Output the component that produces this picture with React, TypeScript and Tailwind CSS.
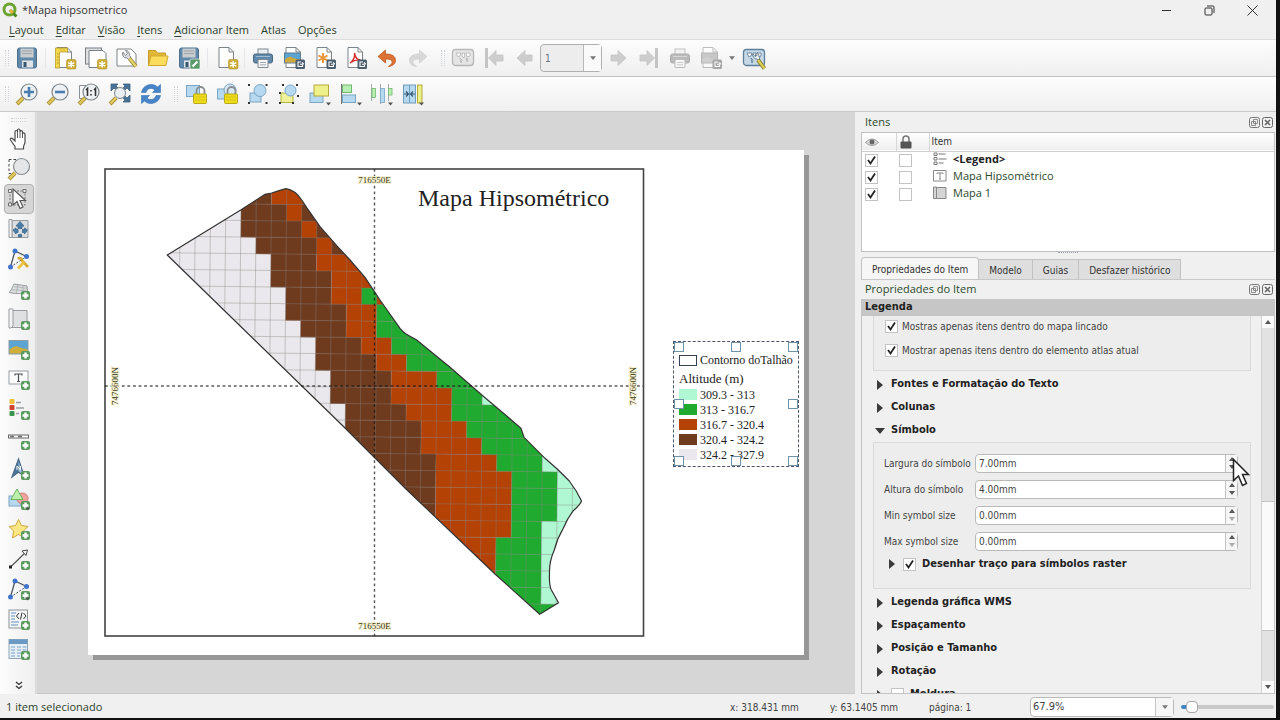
import { useState, type ReactNode } from "react";

/* ---------- icon building blocks ---------- */

function Svg({ children, faded = false }: { children: ReactNode; faded?: boolean }) {
  return (
    <svg viewBox="0 0 24 24" className={faded ? "size-6 opacity-50 grayscale" : "size-6"} fill="none" aria-hidden="true">
      {children}
    </svg>
  );
}

const PlusBadge = () => (
  <g>
    <rect x="14" y="14" width="9" height="9" rx="2" fill="#5a9a5e" />
    <path d="M18.500 15.500v6M15.500 18.500h6" stroke="#fff" strokeWidth="2.400" />
  </g>
);

const StarBadge = () => (
  <g>
    <rect x="13.500" y="13.500" width="9.500" height="9.500" rx="1.500" fill="#cfae36" stroke="#b5952a" strokeWidth="0.600" />
    <path d="M18.200 15v6.500M15.200 16.600l6 3.400M21.200 16.600l-6 3.400" stroke="#fff" strokeWidth="1.500" />
  </g>
);

const ExportBadge = () => (
  <g>
    <rect x="13.500" y="13.500" width="9.500" height="9.500" rx="1.500" fill="#4c5f6e" />
    <path d="M19 16h-3v4.500h4.500V19M18 18.200h3.500M20 16.400l1.800 1.800" stroke="#fff" strokeWidth="1.100" />
  </g>
);

const Paper = () => (
  <path d="M4 1.500h10l4.500 4.500v15.500h-14.500zM14 1.500v4.500h4.500" fill="#fff" stroke="#7d8489" strokeWidth="1" />
);

const Handle = () => (
  <g>
    <path d="M2 22l6-6" stroke="#a8923a" strokeWidth="4" />
    <path d="M2.500 21.500l5.500-5.500" stroke="#e3c85a" strokeWidth="2.400" />
  </g>
);

const Caret = () => <path d="M18 20.500h5l-2.500 3z" fill="#555" />;

const Disk = () => (
  <g>
    <rect x="2.500" y="2" width="19" height="20" rx="2" fill="#5f88ab" stroke="#4c6f8c" />
    <rect x="5.500" y="2.500" width="13" height="9" fill="#c9cdd0" />
    <path d="M7 5h10M7 7.500h10" stroke="#9da3a8" />
    <rect x="7" y="14.500" width="11" height="7" fill="#dfe3e6" />
    <rect x="8.500" y="16" width="3" height="5" fill="#39566f" />
  </g>
);

const Printer = () => (
  <g>
    <rect x="7" y="3" width="10" height="6" fill="#eceff1" stroke="#7f8b95" />
    <rect x="2.500" y="8" width="19" height="9" rx="2" fill="#5f88ab" stroke="#48687f" />
    <path d="M5 10.500h14" stroke="#9dbbd2" />
    <path d="M7 13.500h10v8h-10z" fill="#f4f6f7" stroke="#7f8b95" />
    <path d="M9 16.500h6M9 18.800h6" stroke="#a0a8af" />
  </g>
);

const Picture = () => (
  <g>
    <rect x="2.500" y="7" width="16" height="10" fill="#5ba4d4" stroke="#5e7c8c" />
    <path d="M3 16.500v-3c4-4 6-3 8-1.500 3 1 5 1 7 1.500v3z" fill="#d1a93a" />
  </g>
);

const Arrow = ({ d }: { d: string }) => <path d={d} fill="#9fa8ac" stroke="#8d979b" strokeWidth="0.800" />;

const Nodes = () => (
  <g>
    <path d="M3.500 20L8 4l11.500 5.500" stroke="#505860" strokeWidth="1.300" />
    <path d="M3.500 20l16-10.500" stroke="#505860" strokeDasharray="2 1.500" />
    <circle cx="3.500" cy="20" r="2.500" fill="#3f74cc" />
    <circle cx="8" cy="4" r="2.500" fill="#3f74cc" />
    <circle cx="19.500" cy="9.500" r="2.500" fill="#3f74cc" />
  </g>
);

const Lock = () => (
  <g>
    <path d="M12.500 12.500v-3.500a4 4 0 0 1 8 0v3.500" stroke="#8b8f92" strokeWidth="1.800" />
    <rect x="9.500" y="12" width="13" height="9.500" rx="1" fill="#eddb1c" stroke="#b9a81a" />
    <path d="M11 15h10M11 18h10" stroke="#d8c415" />
  </g>
);

const MapSheet = () => (
  <g>
    <rect x="1.500" y="3.500" width="21" height="16" rx="3" fill="#c6d8e6" stroke="#5d7f9b" strokeWidth="1.300" />
    <path d="M5 7h5l-1 3-2 1zM11 7h3l-1 5-2-2zM15 7h4v3l-3 1zM9 12l2 2-1 3zM15 12l2 1-1 3z" fill="#fff" stroke="#55758f" strokeWidth="0.800" />
  </g>
);

/* ---------- icons ---------- */

const icons = {
  save: <Svg><Disk /></Svg>,
  newLayout: (
    <Svg>
      <Paper />
      <path d="M2.500 2h12v4h-8v16h-4z" fill="#f2d84a" stroke="#b89c2c" strokeWidth="0.800" />
      <path d="M4 8h1.500M4 11h1.500M4 14h1.500M4 17h1.500M8 3.500v1M11 3.500v1" stroke="#8d7720" strokeWidth="0.700" />
      <StarBadge />
    </Svg>
  ),
  duplicate: (
    <Svg>
      <rect x="1.500" y="2" width="16" height="16" fill="#dfe1e3" stroke="#777f85" />
      <path d="M5 4.500h14l3 3v14h-17z" fill="#fff" stroke="#777f85" />
      <StarBadge />
    </Svg>
  ),
  manager: (
    <Svg>
      <path d="M2 3h14l5 5v12h-19z" fill="#fff" stroke="#7d8489" />
      <path d="M8 6a4 4 0 0 0 4 6l1.500 1.500 2.500-2.500-1.500-1.500a4 4 0 0 0-4-5l2 3-2 2z" fill="#d9dcdf" stroke="#6d747a" strokeWidth="0.800" />
      <path d="M14.500 12.500l6.500 8" stroke="#9a8a3b" strokeWidth="4" />
      <path d="M14.500 12.500l6.500 8" stroke="#e2d16a" strokeWidth="2.400" />
    </Svg>
  ),
  folder: (
    <Svg>
      <path d="M2.500 19.500v-15h7l2 2.500h8v12.500z" fill="#e3b638" stroke="#c39a28" />
      <path d="M2.500 19.500L5 10h17l-2 9.500z" fill="#fbdc5c" stroke="#d0a932" />
    </Svg>
  ),
  saveAs: (
    <Svg>
      <Disk />
      <rect x="13" y="13" width="10" height="10" rx="1.500" fill="#5a9a6a" stroke="#fff" strokeWidth="0.600" />
      <path d="M15.500 20.500l5-5" stroke="#fff" strokeWidth="2" />
    </Svg>
  ),
  addPage: <Svg><Paper /><StarBadge /></Svg>,
  print: <Svg><Printer /></Svg>,
  exportImage: <Svg><Paper /><Picture /><ExportBadge /></Svg>,
  exportSvg: (
    <Svg>
      <Paper />
      <path d="M10 7v10M5.500 9.500l9 5M14.500 9.500l-9 5" stroke="#ea963b" strokeWidth="2" />
      <ExportBadge />
    </Svg>
  ),
  exportPdf: (
    <Svg>
      <Paper />
      <path d="M6 17c3-2 5-6 4.500-10 1 5 3 7 6 7-4-.500-7 .500-10.500 3z" stroke="#d5302e" strokeWidth="1.400" />
      <ExportBadge />
    </Svg>
  ),
  undo: (
    <Svg>
      <path d="M3 10.500L10.500 4v4c7 0 10 2.500 10 6.500 0 3-2.500 5.500-7 6 3-2 4-3.500 3.500-5.500-.500-1.500-3-2-6.500-2v4z" fill="#dc7135" stroke="#bd5a24" strokeWidth="0.800" />
    </Svg>
  ),
  redo: (
    <Svg faded>
      <path d="M21 10.500L13.500 4v4c-7 0-10 2.500-10 6.500 0 3 2.500 5.500 7 6-3-2-4-3.500-3.500-5.500.500-1.500 3-2 6.500-2v4z" fill="#b4bcbe" stroke="#a5aeb0" strokeWidth="0.800" />
    </Svg>
  ),
  atlas: <Svg faded><MapSheet /></Svg>,
  first: <Svg faded><rect x="3" y="2" width="3" height="20" fill="#8d979b" /><Arrow d="M6.500 12L14 4.500v4.500h7v6h-7v4.500z" /></Svg>,
  prev: <Svg faded><Arrow d="M4 12l8-7.500v4.500h7v6h-7v4.500z" /></Svg>,
  next: <Svg faded><Arrow d="M20 12l-8-7.500v4.500h-7v6h7v4.500z" /></Svg>,
  last: <Svg faded><rect x="18" y="2" width="3" height="20" fill="#8d979b" /><Arrow d="M17.500 12L10 4.500v4.500h-7v6h7v4.500z" /></Svg>,
  printAtlas: <Svg faded><Printer /></Svg>,
  exportAtlas: <Svg faded><Paper /><Picture /><ExportBadge /></Svg>,
  atlasSettings: (
    <Svg>
      <MapSheet />
      <path d="M11 8a4 4 0 0 0 4 5l1 1 2-2-1-1.500a4 4 0 0 0-2-4l0 3-2 1z" fill="#eef1f3" stroke="#56738c" strokeWidth="0.800" />
      <path d="M16 14l6.500 8.500" stroke="#7d7a33" strokeWidth="4" />
      <path d="M16 14l6.500 8.500" stroke="#e0cf57" strokeWidth="2.200" />
    </Svg>
  ),
  zoomIn: (
    <Svg>
      <Handle />
      <circle cx="14" cy="10" r="8" fill="#eef1f3" stroke="#7d858a" strokeWidth="1.200" />
      <path d="M14 5v10M9 10h10" stroke="#4a7daf" strokeWidth="2.600" />
    </Svg>
  ),
  zoomOut: (
    <Svg>
      <Handle />
      <circle cx="14" cy="10" r="8" fill="#eef1f3" stroke="#7d858a" strokeWidth="1.200" />
      <path d="M9 10h10" stroke="#4a7daf" strokeWidth="2.600" />
    </Svg>
  ),
  zoomActual: (
    <Svg>
      <path d="M2.500 3.500h10v13h-10z" fill="#f7f7f7" stroke="#8b9196" />
      <Handle />
      <circle cx="14" cy="10" r="8" fill="#eef1f3" stroke="#7d858a" strokeWidth="1.200" />
      <path d="M9 8l1.500-1.500v7.500M17 8l1.500-1.500v7.500M14 8v1.500M14 12v1.500" stroke="#333" strokeWidth="1.600" />
    </Svg>
  ),
  zoomFull: (
    <Svg>
      <path d="M3 2h7l-2 2 2 2-2 2-2-2-3 3zM22 2h-7l2 2-2 2 2 2 2-2 3 3zM22 20h-7l2-2-2-2 2-2 2 2 3-3z" fill="#4a7296" stroke="#3c5f7f" strokeWidth="0.800" />
      <Handle />
      <circle cx="12" cy="11" r="5.500" fill="#e9eef1" stroke="#7d858a" />
    </Svg>
  ),
  refresh: (
    <Svg>
      <path d="M2.500 10.500C3.500 5 8 2.500 12.500 2.500c2.500 0 4.500 1 6 2.500L21.500 2.500v8h-8l2.500-2.500c-3.500-3-8-1.500-9 2.500z" fill="#4785c8" stroke="#3570b0" strokeWidth="0.600" />
      <path d="M21.500 13.500c-1 5.500-5.500 8-10 8-2.500 0-4.500-1-6-2.500L2.500 21.500v-8h8L8 16c3.500 3 8 1.500 9-2.500z" fill="#4785c8" stroke="#3570b0" strokeWidth="0.600" />
    </Svg>
  ),
  lock: <Svg><rect x="2.500" y="3.500" width="13" height="11" fill="#b7d9ef" stroke="#7aa5c4" /><Lock /></Svg>,
  unlock: <Svg><rect x="2.500" y="7" width="11" height="10" fill="#b7d9ef" stroke="#7aa5c4" /><circle cx="15" cy="8" r="6" fill="#d5e8f4" stroke="#7aa5c4" /><Lock /></Svg>,
  group: (
    <Svg>
      <rect x="4" y="11" width="11" height="9" fill="#b7d9ef" stroke="#7aa5c4" />
      <circle cx="14" cy="8.500" r="6" fill="#b7d9ef" stroke="#7aa5c4" />
      <path d="M2 2h2v2h-2zM19.500 2h2v2h-2zM2 20h2v2h-2zM19.500 20h2v2h-2z" fill="#333" />
    </Svg>
  ),
  ungroup: (
    <Svg>
      <rect x="4" y="11" width="12" height="9.500" fill="#eef09a" stroke="#b3b545" />
      <circle cx="13.500" cy="8.500" r="5.500" fill="#b7d9ef" stroke="#7aa5c4" />
      <path d="M5 2h2v2h-2zM19 2h2v2h-2zM2 10h2v2h-2zM2 20h2v2h-2zM15 20h2v2h-2zM20 13h2v2h-2z" fill="#333" />
    </Svg>
  ),
  raise: (
    <Svg>
      <rect x="2" y="11" width="13" height="9.500" fill="#b7d9ef" stroke="#7aa5c4" />
      <rect x="6" y="3" width="14.500" height="11" fill="#eef08a" stroke="#b3a93f" />
      <Caret />
    </Svg>
  ),
  align: (
    <Svg>
      <path d="M2.500 2v20" stroke="#777" />
      <rect x="3.500" y="3" width="9" height="7.500" fill="#b8f0b4" stroke="#71b86d" />
      <rect x="3.500" y="13" width="13" height="7.500" fill="#b7d9ef" stroke="#7aa5c4" />
      <Caret />
    </Svg>
  ),
  distribute: (
    <Svg>
      <path d="M1.500 2v17M10.500 2v20M18.500 2v17" stroke="#aaa" />
      <rect x="2" y="6.500" width="3.500" height="9" fill="#b8f0b4" stroke="#71b86d" strokeWidth="0.800" />
      <rect x="10.500" y="6.500" width="4" height="14" fill="#b7d9ef" stroke="#7aa5c4" strokeWidth="0.800" />
      <rect x="18.500" y="6.500" width="3.500" height="6.500" fill="#b8f0b4" stroke="#71b86d" strokeWidth="0.800" />
      <Caret />
    </Svg>
  ),
  resize: (
    <Svg>
      <rect x="2.500" y="3" width="12" height="18" fill="#b7d9ef" stroke="#6f9dbd" />
      <path d="M8.500 3v18" stroke="#6f9dbd" />
      <path d="M3 12h4M14 12h-4M5 9.500l2.500 2.500-2.500 2.500M12 9.500l-2.500 2.500 2.500 2.500" stroke="#355570" strokeWidth="1.200" />
      <rect x="16.500" y="3" width="4.500" height="18" fill="#eef08a" stroke="#b3a93f" />
      <Caret />
    </Svg>
  ),
  pan: (
    <Svg>
      <path d="M8 22v-2.500L3.500 13c-.800-1.500 1-2.500 2.200-1.200L8 14V5c0-2 2.500-2 2.500 0v-1.500c0-2 2.500-2 2.500 0V5c0-1.800 2.500-1.800 2.500 0v2c0-1.500 2.500-1.500 2.500 0.500V15c0 2-1.500 3.500-1.500 5v2z" fill="#fff" stroke="#4b4b4b" strokeWidth="1.200" />
      <path d="M10.500 5v6M13 5v6M15.500 6v5" stroke="#4b4b4b" strokeWidth="0.900" />
    </Svg>
  ),
  zoom: (
    <Svg>
      <path d="M2 2.500h9M2 2.500v14h5" stroke="#444" strokeDasharray="2.500 2" />
      <Handle />
      <circle cx="14.500" cy="9.500" r="8" fill="#e4e6e7" stroke="#888e92" strokeWidth="1.200" />
    </Svg>
  ),
  select: (
    <Svg>
      <rect x="3" y="4" width="15" height="14" stroke="#777" strokeDasharray="2 1.500" />
      <path d="M1.500 2.500h3v3h-3zM16 2.500h3v3h-3zM1.500 16h3v3h-3z" fill="#eee" stroke="#555" strokeWidth="0.800" />
      <path d="M6 2v16l4-3.500 3 7 3-1.500-3-6.500h5.500z" fill="#fff" stroke="#555" strokeWidth="1.100" />
    </Svg>
  ),
  moveContent: (
    <Svg>
      <path d="M5 3.500h16v17h-16z" fill="#dadcdd" stroke="#979c9f" />
      <path d="M2 2.500h3v18h-3z" fill="#f1f1f1" stroke="#979c9f" />
      <path d="M13 4.500l4 4.500h-2v2.500h-4v-2.500h-2zM11.500 20v-2.500h3v2.500zM6 13l3-2v1.500h2v3h-2v1.500zM20.500 13l-3-2v1.500h-2v3h2v1.500z" fill="#4a7da8" stroke="#3a668c" strokeWidth="0.800" />
    </Svg>
  ),
  editNodes: (
    <Svg>
      <Nodes />
      <path d="M11 12c2-2 4 0 4 1.500l6 6.500" stroke="#d8ab32" strokeWidth="2.600" />
      <path d="M11 21.500l6-6.500" stroke="#e9c53f" strokeWidth="2.600" />
    </Svg>
  ),
  map3d: (
    <Svg>
      <path d="M2 15.500c2-1 3-5 5-8.500l13 2c0 4 1 6 2 8.500-6-2-13 0-20-2z" fill="#dcdedf" stroke="#979c9f" />
      <path d="M7 10c4-1 9 2 14 1M5 13c5-1 10 1 16 1M11 8l-2 8M16 8.500l0 8" stroke="#a9adaf" strokeWidth="0.800" />
      <PlusBadge />
    </Svg>
  ),
  addMap: (
    <Svg>
      <path d="M5 3.500h15v17h-15z" fill="#dfe0e1" stroke="#979c9f" />
      <path d="M2 2h4v17l-2 2h-2z" fill="#f4f4f4" stroke="#979c9f" />
      <PlusBadge />
    </Svg>
  ),
  addPicture: (
    <Svg>
      <rect x="2" y="3.500" width="19" height="13.500" fill="#5ba4d4" stroke="#8d9da3" />
      <path d="M2.500 16.500v-4c4-3 7-4 9-2.500 3 1 6 2 9 2v4.500z" fill="#cfae3c" />
      <PlusBadge />
    </Svg>
  ),
  addLabel: (
    <Svg>
      <rect x="2" y="4" width="19" height="13" fill="#fbfbfb" stroke="#9a9fa3" />
      <path d="M8 8.500v-1.500h7v1.500M11.500 7v7.500M10 14.500h3" stroke="#4a4f53" strokeWidth="1.200" />
      <PlusBadge />
    </Svg>
  ),
  addLegend: (
    <Svg>
      <rect x="2.500" y="2" width="5" height="5" rx="1" fill="#eebf3a" />
      <rect x="2.500" y="8" width="5" height="5" rx="1" fill="#cd4433" />
      <rect x="2.500" y="14" width="5" height="5" rx="1" fill="#3d9650" />
      <path d="M9 5.500h5M9 11h8M9 16.500h3" stroke="#9a9ea1" strokeWidth="1.400" />
      <PlusBadge />
    </Svg>
  ),
  addScale: (
    <Svg>
      <rect x="1.500" y="8" width="20" height="3" fill="#fff" stroke="#666" />
      <path d="M3 9.500h4M11 9.500h4" stroke="#777" strokeWidth="2" />
      <PlusBadge />
    </Svg>
  ),
  addNorth: (
    <Svg>
      <path d="M11.500 2l5.500 17-5.500-4-6.500 5z" fill="#9fc1dd" stroke="#3f6384" strokeWidth="1.200" />
      <path d="M11.500 2v13l-6.500 5z" fill="#4a7397" />
      <path d="M10 13v-4l3.500 4v-4" stroke="#fff" strokeWidth="1" />
      <PlusBadge />
    </Svg>
  ),
  addShape: (
    <Svg>
      <rect x="2" y="9" width="12" height="10" fill="#b7d9ef" stroke="#7aa5c4" />
      <circle cx="15.500" cy="11.500" r="5.500" fill="#f0a29c" stroke="#cf7c76" />
      <path d="M10 2l6 10.500h-12z" fill="#bdf0ac" stroke="#6fb35f" />
      <PlusBadge />
      <Caret />
    </Svg>
  ),
  addMarker: (
    <Svg>
      <path d="M11.500 2.500l3 6 6.500 1-4.500 4.500 1 7-6-3.500-6 3.500 1-7-4.500-4.500 6.500-1z" fill="#fde683" stroke="#cfa945" />
      <PlusBadge />
    </Svg>
  ),
  addArrow: (
    <Svg>
      <path d="M3.500 20L19 5" stroke="#555" strokeWidth="1.200" />
      <path d="M15 4l5.500-1-1.500 5.500z" fill="#fff" stroke="#444" />
      <path d="M2 18.500h3v3h-3z" fill="#222" />
      <PlusBadge />
    </Svg>
  ),
  addNode: <Svg><Nodes /><PlusBadge /><Caret /></Svg>,
  addHtml: (
    <Svg>
      <rect x="2" y="3" width="18.500" height="18" fill="#f3f5f6" stroke="#8d9499" />
      <path d="M4 6h5M4 9h4M4 12h4M4 15h8M4 18h7" stroke="#6790bd" strokeWidth="1.200" />
      <path d="M12 6l-2.500 3 2.500 3M16.500 6l2.500 3-2.500 3M15 5.500l-1.500 7" stroke="#333" strokeWidth="1" />
      <PlusBadge />
    </Svg>
  ),
  addTable: (
    <Svg>
      <rect x="2" y="2.500" width="18.500" height="19" fill="#e4eef6" stroke="#8fa6b8" />
      <rect x="2" y="2.500" width="18.500" height="4.500" fill="#6a9ac4" />
      <path d="M4 10h4M10 10h4M15.500 10h4M4 13h4M10 13h4M15.500 13h4M4 16h4M10 16h4M4 19h4M10 19h3" stroke="#7da4c6" strokeWidth="1.200" />
      <PlusBadge />
    </Svg>
  ),
};

type IconName = keyof typeof icons;

/* ---------- toolbars ---------- */

const layoutTools: [IconName, string][] = [
  ["newLayout", "Novo layout"],
  ["duplicate", "Duplicar layout"],
  ["manager", "Gerenciador de layout"],
  ["folder", "Adicionar itens do modelo"],
  ["saveAs", "Salvar como modelo"],
];

const exportTools: [IconName, string][] = [
  ["print", "Imprimir"],
  ["exportImage", "Exportar como imagem"],
  ["exportSvg", "Exportar como SVG"],
  ["exportPdf", "Exportar como PDF"],
  ["undo", "Desfazer"],
  ["redo", "Refazer"],
];

const zoomTools: [IconName, string][] = [
  ["zoomIn", "Aproximar"],
  ["zoomOut", "Afastar"],
  ["zoomActual", "Zoom 100%"],
  ["zoomFull", "Ver tudo"],
  ["refresh", "Atualizar"],
];

const actionTools: [IconName, string][] = [
  ["lock", "Travar itens"],
  ["unlock", "Destravar itens"],
  ["group", "Agrupar"],
  ["ungroup", "Desagrupar"],
  ["raise", "Levantar"],
  ["align", "Alinhar"],
  ["distribute", "Distribuir"],
  ["resize", "Redimensionar"],
];

const sideTools: [IconName, string][] = [
  ["pan", "Mover layout"],
  ["zoom", "Zoom"],
  ["select", "Selecionar item"],
  ["moveContent", "Mover conteúdo"],
  ["editNodes", "Editar nós"],
  ["map3d", "Adicionar mapa 3D"],
  ["addMap", "Adicionar mapa"],
  ["addPicture", "Adicionar imagem"],
  ["addLabel", "Adicionar rótulo"],
  ["addLegend", "Adicionar legenda"],
  ["addScale", "Adicionar barra de escala"],
  ["addNorth", "Adicionar seta norte"],
  ["addShape", "Adicionar forma"],
  ["addMarker", "Adicionar marcador"],
  ["addArrow", "Adicionar seta"],
  ["addNode", "Adicionar item de nó"],
  ["addHtml", "Adicionar HTML"],
  ["addTable", "Adicionar tabela"],
];

function Tool({ icon, label }: { icon: IconName; label: string }) {
  return (
    <button type="button" aria-label={label} className="flex h-8 w-[31px] shrink-0 items-center justify-center rounded hover:bg-gray-200">
      {icons[icon]}
    </button>
  );
}

const Tools = ({ items }: { items: [IconName, string][] }) => (
  <>{items.map(([icon, label]) => <Tool key={icon} icon={icon} label={label} />)}</>
);

const Grip = ({ first = false }: { first?: boolean }) => (
  <div className={`h-4 w-1 shrink-0 border-x border-dotted border-gray-300 ${first ? "ml-[5px] mr-[2px]" : "ml-2 mr-[2px]"}`} />
);
const Divider = ({ tight = false }: { tight?: boolean }) => (
  <div className={`h-5 w-px shrink-0 bg-gray-200 ${tight ? "mx-[2px]" : "mx-[3px]"}`} />
);

const DownArrow = () => (
  <svg viewBox="0 0 8 5" className="h-1 w-1.5" aria-hidden="true">
    <path d="M0 0h8L4 5z" fill="#777" />
  </svg>
);

/* ---------- elevation map ---------- */

const BROWN = "#6f3b1f";
const ORANGE = "#b44204";
const GREEN = "#20ab30";
const MINT = "#b0f8d3";
const WHITE = "#eae8ec";

// [row, first column, end column, colour]; later runs paint over earlier ones
const runs: [number, number, number, string][] = [
  [-4, 0, 2, BROWN], [-4, 2, 6, ORANGE],
  [-3, 0, 2, BROWN], [-3, 2, 6, ORANGE],
  [-2, 0, 8, BROWN], [-2, 3, 4, ORANGE],
  [-1, 0, 9, BROWN], [-1, 4, 5, ORANGE],
  [0, 1, 9, BROWN], [0, 5, 6, ORANGE],
  [1, 2, 5, BROWN], [1, 5, 10, ORANGE],
  [2, 2, 6, BROWN], [2, 6, 11, ORANGE],
  [3, 3, 6, BROWN], [3, 6, 11, ORANGE], [3, 8, 9, GREEN],
  [4, 3, 7, BROWN], [4, 7, 9, ORANGE], [4, 9, 14, GREEN],
  [5, 4, 7, BROWN], [5, 7, 9, ORANGE], [5, 9, 14, GREEN],
  [6, 5, 8, BROWN], [6, 8, 10, ORANGE], [6, 10, 17, GREEN],
  [7, 5, 9, BROWN], [7, 9, 11, ORANGE], [7, 11, 18, GREEN],
  [8, 6, 10, BROWN], [8, 10, 13, ORANGE], [8, 13, 20, GREEN],
  [9, 6, 10, BROWN], [9, 10, 14, ORANGE], [9, 14, 16, GREEN], [9, 16, 20, MINT],
  [10, 7, 11, BROWN], [10, 11, 14, ORANGE], [10, 14, 22, GREEN],
  [11, 7, 12, BROWN], [11, 12, 15, ORANGE], [11, 15, 22, GREEN],
  [12, 7, 12, BROWN], [12, 12, 16, ORANGE], [12, 16, 24, GREEN],
  [13, 7, 13, BROWN], [13, 13, 17, ORANGE], [13, 17, 20, GREEN], [13, 20, 24, MINT],
  [14, 7, 13, BROWN], [14, 13, 18, ORANGE], [14, 18, 21, GREEN], [14, 21, 24, MINT],
  [15, 7, 13, BROWN], [15, 13, 18, ORANGE], [15, 18, 21, GREEN], [15, 21, 24, MINT],
  [16, 7, 13, BROWN], [16, 13, 18, ORANGE], [16, 18, 21, GREEN], [16, 21, 24, MINT],
  [17, 7, 13, BROWN], [17, 13, 18, ORANGE], [17, 18, 20, GREEN], [17, 20, 24, MINT],
  [18, 10, 17, ORANGE], [18, 17, 20, GREEN], [18, 20, 24, MINT],
  [19, 10, 17, ORANGE], [19, 17, 20, GREEN], [19, 20, 24, MINT],
  [20, 10, 17, ORANGE], [20, 17, 20, GREEN], [20, 20, 24, MINT],
  [21, 14, 20, GREEN], [21, 20, 24, MINT],
  [22, 14, 24, GREEN],
  [23, 14, 24, GREEN],
];

const FIELD =
  "M79.300 105L152.700 60L177 44.300L183.700 43Q193 40 198 38.700Q207 40 213.700 50L218.700 57.700L232 76.700L248.700 95.700L262 110L277 127.300L292 150L312 178.300Q315 182 318 184L328.700 190L362 217.300L395 246L418.700 266L433 278.300L436 287.300L457 308.300L470.300 320L481.300 331Q489 341 493.500 351Q492 355 485.300 360.700Q479 369 475.300 378.300Q469 389 466.300 400Q461 412 461.500 423.300Q461 434 463 439.300L470.500 452.700L451.700 464.300L407 424L318 339L256 277Z";

const CELL_W = 15.2;
const CELL_H = 16.54;

function ElevationMap() {
  const cols = Array.from({ length: 31 }, (_, i) => i - 6);
  const rows = Array.from({ length: 29 }, (_, i) => i - 4);
  return (
    <svg viewBox="0 0 716 505" className="block h-full w-full" role="img" aria-label="Mapa 1">
      <defs>
        <clipPath id="field"><path d={FIELD} /></clipPath>
      </defs>
      <rect x="17" y="19" width="538.500" height="467" fill="#fff" stroke="#444" strokeWidth="1.600" />
      <g clipPath="url(#field)">
        <rect width="716" height="505" fill={WHITE} />
        <g transform="translate(152.700 87) rotate(0.600)">
          {runs.map(([row, from, to, color], i) => (
            <rect key={i} x={from * CELL_W} y={row * CELL_H} width={(to - from) * CELL_W} height={CELL_H + 0.3} fill={color} />
          ))}
          <g stroke="#87827f" strokeOpacity="0.500" strokeWidth="0.800">
            {cols.map((c) => <path key={c} d={`M${c * CELL_W} -70V400`} />)}
            {rows.map((r) => <path key={r} d={`M-100 ${r * CELL_H}H370`} />)}
          </g>
        </g>
      </g>
      <path d={FIELD} fill="none" stroke="#333" strokeWidth="1.200" />
      <path d="M286.500 19V486M17 236H555" stroke="#111" strokeOpacity="0.700" strokeWidth="1.400" strokeDasharray="2.800 2.800" fill="none" />
      <g fontFamily="Liberation Serif, serif" fontSize="9" textAnchor="middle" fill="#3b3a20" stroke="#f5f0cf" strokeWidth="2" paintOrder="stroke">
        <text x="286.500" y="33">716550E</text>
        <text x="286.500" y="479">716550E</text>
        <text transform="translate(30 236) rotate(-90)">7476600N</text>
        <text transform="translate(548 236) rotate(-90)">7476600N</text>
      </g>
    </svg>
  );
}

const classes = [
  { label: "309.3 - 313", swatch: "bg-[#b0f8d3]" },
  { label: "313 - 316.7", swatch: "bg-[#20ab30]" },
  { label: "316.7 - 320.4", swatch: "bg-[#b44204]" },
  { label: "320.4 - 324.2", swatch: "bg-[#6f3b1f]" },
  { label: "324.2 - 327.9", swatch: "bg-[#eae8ec]" },
];

const grips = [
  "left-0 top-0", "left-[57px] top-0", "right-0 top-0",
  "left-0 top-[57px]", "right-0 top-[57px]",
  "left-0 bottom-0", "left-[57px] bottom-0", "right-0 bottom-0",
];

function MapLegend() {
  return (
    <div className="absolute left-[585px] top-[191px] size-[126px] border border-dashed border-gray-600 bg-white pl-[5px] pt-[10px] text-[12px] text-[#222]">
      <div className="flex h-4 items-center gap-[3px] whitespace-nowrap">
        <span className="h-[11px] w-[18px] border border-gray-700" />
        Contorno doTalhão
      </div>
      <div className="mt-[3px] h-4 text-[13px] leading-4">Altitude (m)</div>
      {classes.map((c) => (
        <div key={c.label} className="flex h-[15px] items-center gap-[3px]">
          <span className={`h-[11px] w-[18px] ${c.swatch}`} />
          {c.label}
        </div>
      ))}
      {grips.map((g) => (
        <span key={g} className={`absolute size-[10px] border border-[#6f93a8] bg-white ${g}`} />
      ))}
    </div>
  );
}

/* ---------- right panel ---------- */

function Check({ id, label, checked = false }: { id: string; label?: string; checked?: boolean }) {
  return (
    <span className="relative inline-block size-[13px] shrink-0 align-middle">
      <input
        id={id}
        type="checkbox"
        aria-label={label}
        defaultChecked={checked}
        className="peer block size-[13px] appearance-none border border-[#c3c3c3] bg-white"
      />
      <svg viewBox="0 0 13 13" className="pointer-events-none absolute inset-0 hidden size-[13px] peer-checked:block" fill="none" aria-hidden="true">
        <path d="M3 6l2.500 3.500L10 2.500" stroke="#222" strokeWidth="1.800" />
      </svg>
    </span>
  );
}

function DockTitle({ title }: { title: string }) {
  return (
    <div className="flex h-[19px] shrink-0 items-center justify-between pl-1 pr-[2px] font-[Open_Sans,sans-serif] text-[11px] text-[#2b4a2b]">
      <h2>{title}</h2>
      <div className="flex gap-[2px]">
        <button type="button" aria-label="Destacar painel" className="size-[11px]">
          <svg viewBox="0 0 11 11" fill="none" stroke="#777">
            <rect x="0.500" y="0.500" width="10" height="10" rx="2" />
            <path d="M4.500 2.500h4v4h-4zM2.500 4.500h4v4h-4z" strokeWidth="0.800" />
          </svg>
        </button>
        <button type="button" aria-label="Fechar painel" className="size-[11px]">
          <svg viewBox="0 0 11 11" fill="none" stroke="#666">
            <rect x="0.500" y="0.500" width="10" height="10" rx="2" />
            <path d="M3 3l5 5M8 3l-5 5" strokeWidth="1.600" />
          </svg>
        </button>
      </div>
    </div>
  );
}

const treeItems = [
  {
    name: "<Legend>",
    bold: true,
    icon: <path d="M1 1h3v2.500h-3zM1 5.500h3v2.500h-3zM1 10h3v2.500h-3zM5.500 2h7M5.500 7h8M5.500 11h5" stroke="#777" />,
  },
  {
    name: "Mapa Hipsométrico",
    bold: false,
    icon: <path d="M0.500 1.500h12.500v10.500h-12.500zM4 5v-1h6v1M7 4v6M6 10h2" stroke="#888" />,
  },
  {
    name: "Mapa 1",
    bold: false,
    icon: <path d="M3.500 1.500h9.500v11h-9.500zM0.500 1h3v11.500h-3z" fill="#d4d4d4" stroke="#888" />,
  },
];

function ItemsTree() {
  return (
    <div className="h-[120px] shrink-0 border border-[#c2c2c2] bg-white">
      <table className="w-full table-fixed border-collapse text-left">
        <thead>
          <tr className="h-[18px] border-b border-[#cfcfcf] bg-linear-to-b from-white to-[#eeeeee]">
            <th className="w-[34px] border-r border-[#d6d6d6] pl-[3px]">
              <svg viewBox="0 0 14 10" className="h-[10px] w-[14px]" fill="none" aria-label="Visível">
                <path d="M0.500 5.500q6.500-7 13 0q-6.500 6-13 0z" stroke="#999" fill="#ddd" />
                <circle cx="7" cy="5" r="2.500" fill="#666" />
              </svg>
            </th>
            <th className="w-[33px] border-r border-[#d6d6d6] pl-[3px]">
              <svg viewBox="0 0 12 14" className="h-[14px] w-3" fill="none" aria-label="Travado">
                <path d="M3 7v-3a3 3 0 0 1 6 0v3" stroke="#777" strokeWidth="1.500" />
                <rect x="0.500" y="6.500" width="11" height="7" rx="1" fill="#555" />
              </svg>
            </th>
            <th className="pl-[2px] text-[10px] font-normal leading-4 text-[#333]">Item</th>
          </tr>
        </thead>
        <tbody>
          {treeItems.map((item, i) => (
            <tr key={item.name} className="h-[17px]">
              <td className="pl-[3px] leading-none"><Check id={`visible-${i}`} label={`${item.name} visível`} checked /></td>
              <td className="pl-[3px] leading-none"><Check id={`locked-${i}`} label={`${item.name} travado`} /></td>
              <td>
                <div className="flex h-[17px] items-center gap-[6px] pl-1 pb-[2px] font-[Open_Sans,sans-serif] text-[11px] text-[#2b4a2b]">
                  <svg viewBox="0 0 14 14" className="size-[14px]" fill="none" aria-hidden="true">{item.icon}</svg>
                  <span className={item.bold ? "font-bold text-[#222]" : ""}>{item.name}</span>
                </div>
              </td>
            </tr>
          ))}
        </tbody>
      </table>
    </div>
  );
}

const tabs = ["Propriedades do Item", "Modelo", "Guias", "Desfazer histórico"];

const Triangle = ({ open = false }: { open?: boolean }) => (
  <svg viewBox="0 0 10 10" className="size-[10px] shrink-0" aria-hidden="true">
    <path d={open ? "M0 2h10l-5 6z" : "M2 0l6 5-6 5z"} fill="#3a3a3a" />
  </svg>
);

function Section({ title, open = false }: { title: string; open?: boolean }) {
  return (
    <button type="button" aria-expanded={open} className="flex h-[23px] w-full shrink-0 items-center gap-[6px] pl-[2px] text-left text-[11px] font-bold text-[#222]">
      <Triangle open={open} />
      {title}
    </button>
  );
}

function SpinArrow({ up = false, dim = false }: { up?: boolean; dim?: boolean }) {
  return (
    <svg viewBox="0 0 6 4" className="h-1 w-1.5" aria-hidden="true">
      <path d={up ? "M0 4h6L3 0z" : "M0 0h6L3 4z"} fill={dim ? "#aaa" : "#555"} />
    </svg>
  );
}

const sizes = [
  { id: "width", label: "Largura do símbolo", value: "7.00mm" },
  { id: "height", label: "Altura do símbolo", value: "4.00mm" },
  { id: "min", label: "Min symbol size", value: "0.00mm" },
  { id: "max", label: "Max symbol size", value: "0.00mm" },
];

function SpinBox({ id, label, value }: { id: string; label: string; value: string }) {
  return (
    <div className="relative flex h-[26px] items-center">
      <label htmlFor={id} className="w-[91px] shrink-0 whitespace-nowrap">{label}</label>
      <div className="flex h-[19px] min-w-0 flex-1 rounded-sm border border-[#b9b9b9] bg-white">
        <input id={id} type="text" defaultValue={value} className="min-w-0 flex-1 bg-transparent px-[3px] outline-none" />
        <div className="flex w-3 flex-col border-l border-[#c4c4c4] bg-[#f6f6f6]">
          <button type="button" aria-label={`Aumentar ${label}`} className="flex flex-1 items-center justify-center"><SpinArrow up /></button>
          <button type="button" aria-label={`Diminuir ${label}`} className="flex flex-1 items-center justify-center"><SpinArrow dim={value === "0.00mm"} /></button>
        </div>
      </div>
      {id === "width" && (
        <svg viewBox="0 0 18 30" className="pointer-events-none absolute -right-[12px] top-[8px] z-10 h-[30px] w-[18px]" aria-hidden="true">
          <path d="M1.500 1.500v21l5-4.500 4 9.500 4-2-4-9h6z" fill="#fff" stroke="#222" strokeWidth="1.500" />
        </svg>
      )}
    </div>
  );
}

function Properties() {
  return (
    <div className="flex min-h-0 flex-1 border border-[#c4c4c4] text-[10px] text-[#444]">
      <div className="min-w-0 flex-1 overflow-hidden pl-[11px] pr-[10px]">
        <div className="flex h-[55px] flex-col border-x border-b border-[#dadada] bg-[#ededed] pl-[11px]">
          <label className="flex h-[21px] items-center gap-1"><Check id="linked" checked /> Mostras apenas itens dentro do mapa lincado</label>
          <label className="flex h-[26px] items-center gap-1"><Check id="atlas" checked /> Mostrar apenas itens dentro do elemento atlas atual</label>
        </div>
        <div className="pt-[2px]">
          <Section title="Fontes e Formatação do Texto" />
          <Section title="Colunas" />
          <Section title="Símbolo" open />
        </div>
        <div className="h-[147px] border border-[#dadada] bg-[#ededed] pl-[10px] pr-3 pt-[7px]">
          {sizes.map((s) => <SpinBox key={s.id} {...s} />)}
          <div className="flex h-5 items-center gap-[6px] pl-[3px] text-[11px] font-bold text-[#222]">
            <Triangle />
            <Check id="raster-stroke" checked />
            <label htmlFor="raster-stroke">Desenhar traço para símbolos raster</label>
          </div>
        </div>
        <div className="pt-[2px]">
          <Section title="Legenda gráfica WMS" />
          <Section title="Espaçamento" />
          <Section title="Posição e Tamanho" />
          <Section title="Rotação" />
          <div className="flex h-[23px] items-center gap-[6px] pl-[2px] text-[11px] font-bold text-[#222]">
            <Triangle />
            <Check id="frame" />
            <label htmlFor="frame">Moldura</label>
          </div>
        </div>
      </div>
      <div className="flex w-[13px] shrink-0 flex-col border-l border-[#d0d0d0] bg-[#e2e2e2]">
        <button type="button" aria-label="Rolar para cima" className="flex h-3 items-center justify-center bg-[#fafafa]"><SpinArrow up /></button>
        <div className="flex-[174]" />
        <div className="flex-[130] border-y border-[#c4c4c4] bg-[#fafafa]" />
        <div className="flex-[50]" />
        <button type="button" aria-label="Rolar para baixo" className="flex h-3 items-center justify-center bg-[#fafafa]"><SpinArrow /></button>
      </div>
    </div>
  );
}

function SidePanel() {
  const [activeTab, setActiveTab] = useState(0);
  return (
    <aside className="flex w-[421px] shrink-0 flex-col pl-[6px] pr-px pt-[1px] font-[DejaVu_Sans_Condensed,DejaVu_Sans,sans-serif]">
      <DockTitle title="Itens" />
      <ItemsTree />
      <div className="flex h-[6px] shrink-0 justify-center"><span className="h-px w-5 border-t border-dotted border-gray-400" /></div>
      <div role="tablist" className="flex h-[22px] shrink-0 items-end border-b border-[#c8c8c8] text-[10px] text-[#333]">
        {tabs.map((tab, index) => (
          <button
            key={tab}
            type="button"
            role="tab"
            aria-selected={activeTab === index}
            onClick={() => setActiveTab(index)}
            className={`whitespace-nowrap border border-b-0 border-[#c2c2c2] pt-[2px] ${
              activeTab === index ? "h-[22px] rounded-t-sm bg-[#f6f6f6] px-[10px]" : "h-5 border-l-0 bg-[#dedede] px-[10px]"
            }`}
          >
            {tab}
          </button>
        ))}
      </div>
      <DockTitle title={tabs[activeTab]} />
      <h3 className="h-[16px] shrink-0 bg-[#c6c6c6] pl-1 text-[11px] font-bold leading-4 text-[#222]">Legenda</h3>
      <Properties />
    </aside>
  );
}

/* ---------- window ---------- */

const menus = [
  { key: "L", rest: "ayout" },
  { key: "E", rest: "ditar" },
  { key: "V", rest: "isão" },
  { key: "I", rest: "tens" },
  { key: "A", rest: "dicionar Item" },
  { key: "", rest: "Atlas" },
  { key: "", rest: "Opções" },
];

export default function App() {
  return (
    <div className="flex h-screen flex-col overflow-hidden border-b-2 border-r-4 border-[#111] bg-[#f0f0f0] font-[Open_Sans,sans-serif] text-[11px] text-[#333]">
      {/* Title bar */}
      <header className="flex h-5 shrink-0 items-center justify-between pl-[2px] pr-[18px]">
        <div className="flex items-center gap-1">
          <svg viewBox="0 0 16 16" className="size-4" fill="none" aria-hidden="true">
            <circle cx="7.500" cy="7.500" r="5.500" stroke="#6aa32f" strokeWidth="3" />
            <path d="M8 8l6.500 6.500" stroke="#4f8a24" strokeWidth="3" />
            <path d="M8 8l3 3" stroke="#e8b53a" strokeWidth="3" />
          </svg>
          <h1 className="text-[11px]">*Mapa hipsometrico</h1>
        </div>
        <div className="flex items-center gap-8">
          <button type="button" aria-label="Minimizar" className="size-[11px]"><svg viewBox="0 0 11 11"><path d="M1 5.500h9" stroke="#333" /></svg></button>
          <button type="button" aria-label="Restaurar" className="size-[11px]">
            <svg viewBox="0 0 11 11" fill="none" stroke="#333"><rect x="1" y="3" width="7" height="7" rx="1" /><path d="M3 1h6a1 1 0 0 1 1 1v6" /></svg>
          </button>
          <button type="button" aria-label="Fechar" className="size-[11px]"><svg viewBox="0 0 11 11"><path d="M0.500 0.500l10 10M10.500 0.500l-10 10" stroke="#333" /></svg></button>
        </div>
      </header>

      {/* Menu */}
      <nav className="flex h-5 shrink-0 items-center border-b border-[#dcdcdc] pl-[3px] pt-[2px] text-[#2c3f2c]">
        {menus.map((m) => (
          <button key={m.key + m.rest} type="button" className="px-[6px]">
            {m.key && <span className="underline underline-offset-2">{m.key}</span>}{m.rest}
          </button>
        ))}
      </nav>

      {/* Layout toolbar */}
      <div className="flex h-[37px] shrink-0 items-center border-b border-[#c2c2c2] bg-linear-to-b from-[#fdfdfd] to-[#efefef]">
        <Grip first />
        <Tool icon="save" label="Salvar projeto" />
        <Divider />
        <Tools items={layoutTools} />
        <Divider />
        <Tool icon="addPage" label="Adicionar páginas" />
        <Divider tight />
        <Tools items={exportTools} />
        <Grip />
        <Tool icon="atlas" label="Visualizar atlas" />
        <Tool icon="first" label="Primeira feição" />
        <Tool icon="prev" label="Feição anterior" />
        <div className="relative h-7 w-[62px]">
          <select aria-label="Feição do atlas" className="h-7 w-full appearance-none rounded-sm border border-[#b0b0b0] bg-[#ededed] pl-1 font-[DejaVu_Sans_Condensed,sans-serif] text-[10px] text-gray-500">
            <option>1</option>
          </select>
          <span className="pointer-events-none absolute inset-y-px right-px flex w-[18px] items-center justify-center border-l border-[#b8b8b8] bg-[#fafafa]"><DownArrow /></span>
        </div>
        <Tool icon="next" label="Próxima feição" />
        <Tool icon="last" label="Última feição" />
        <Tool icon="printAtlas" label="Imprimir atlas" />
        <Tool icon="exportAtlas" label="Exportar atlas" />
        <div className="mx-[3px]"><DownArrow /></div>
        <Tool icon="atlasSettings" label="Configurações do atlas" />
      </div>

      {/* Actions toolbar */}
      <div className="flex h-[35px] shrink-0 items-center border-b border-[#c8c8c8] bg-linear-to-b from-[#fdfdfd] to-[#efefef]">
        <Grip first />
        <Tools items={zoomTools} />
        <Grip />
        <Tools items={actionTools} />
      </div>

      <div className="flex min-h-0 flex-1">
        {/* Toolbox */}
        <div className="flex w-[37px] shrink-0 flex-col items-center border-r-2 border-[#dcdcdc] bg-linear-to-r from-[#fcfcfc] to-[#efefef] pl-[2px] pt-[6px]">
          <div className="mb-[2px] h-1 w-4 shrink-0 border-y border-dotted border-gray-300" />
          {sideTools.map(([icon, label]) => (
            <button
              key={icon}
              type="button"
              aria-label={label}
              className={`flex h-[30px] w-[30px] shrink-0 items-center justify-center rounded-sm border ${
                icon === "select" ? "border-[#b0b0b0] bg-[#d6d6d6]" : "border-transparent"
              }`}
            >
              {icons[icon]}
            </button>
          ))}
          <button type="button" aria-label="Mais ferramentas" className="mt-[17px]">
            <svg viewBox="0 0 8 9" className="h-[9px] w-2" fill="none" stroke="#333" strokeWidth="1.300"><path d="M1 1l3 2.500L7 1M1 5l3 2.500L7 5" /></svg>
          </button>
        </div>

        {/* Canvas */}
        <main className="flex min-w-0 flex-1 items-center justify-center overflow-hidden border-b border-[#c8c8c8] bg-[#d6d6d6]">
          <div className="relative h-[505px] w-[716px] shrink-0 bg-white font-[Liberation_Serif,serif] shadow-[5px_5px_0_#979797]">
            <ElevationMap />
            <p className="absolute left-[330px] top-[32px] whitespace-nowrap text-[24px] leading-8 text-[#222]">Mapa Hipsométrico</p>
            <MapLegend />
          </div>
        </main>

        <SidePanel />
      </div>

      {/* Status bar */}
      <footer className="flex h-6 shrink-0 items-center pl-[6px] pt-[2px] text-[#2c3f2c]">
        <span className="flex-1">1 item selecionado</span>
        <div className="flex items-center font-[DejaVu_Sans_Condensed,DejaVu_Sans,sans-serif] text-[10px] text-[#444]">
          <span className="w-[100px]">x: 318.431 mm</span>
          <span className="w-[99px]">y: 63.1405 mm</span>
          <span className="w-[101px]">página: 1</span>
          <div className="relative h-5 w-[144px]">
            <select aria-label="Zoom" className="h-5 w-full appearance-none rounded-sm border border-[#b9b9b9] bg-white pl-[2px] text-[11px]">
              <option>67.9%</option>
            </select>
            <span className="pointer-events-none absolute inset-y-px right-px flex w-[18px] items-center justify-center border-l border-[#c4c4c4] bg-[#f6f6f6]"><DownArrow /></span>
          </div>
          <input
            type="range"
            aria-label="Nível de zoom"
            defaultValue={6}
            className="ml-[7px] mr-[2px] h-3 w-[93px] appearance-none bg-transparent [&::-webkit-slider-runnable-track]:h-1 [&::-webkit-slider-runnable-track]:rounded-sm [&::-webkit-slider-runnable-track]:bg-linear-to-r [&::-webkit-slider-runnable-track]:from-[#3d87c4] [&::-webkit-slider-runnable-track]:from-5% [&::-webkit-slider-runnable-track]:to-[#c9c9c9] [&::-webkit-slider-runnable-track]:to-5% [&::-webkit-slider-thumb]:-mt-1 [&::-webkit-slider-thumb]:size-3 [&::-webkit-slider-thumb]:appearance-none [&::-webkit-slider-thumb]:rounded-sm [&::-webkit-slider-thumb]:border [&::-webkit-slider-thumb]:border-[#a8a8a8] [&::-webkit-slider-thumb]:bg-white"
          />
        </div>
      </footer>
    </div>
  );
}
